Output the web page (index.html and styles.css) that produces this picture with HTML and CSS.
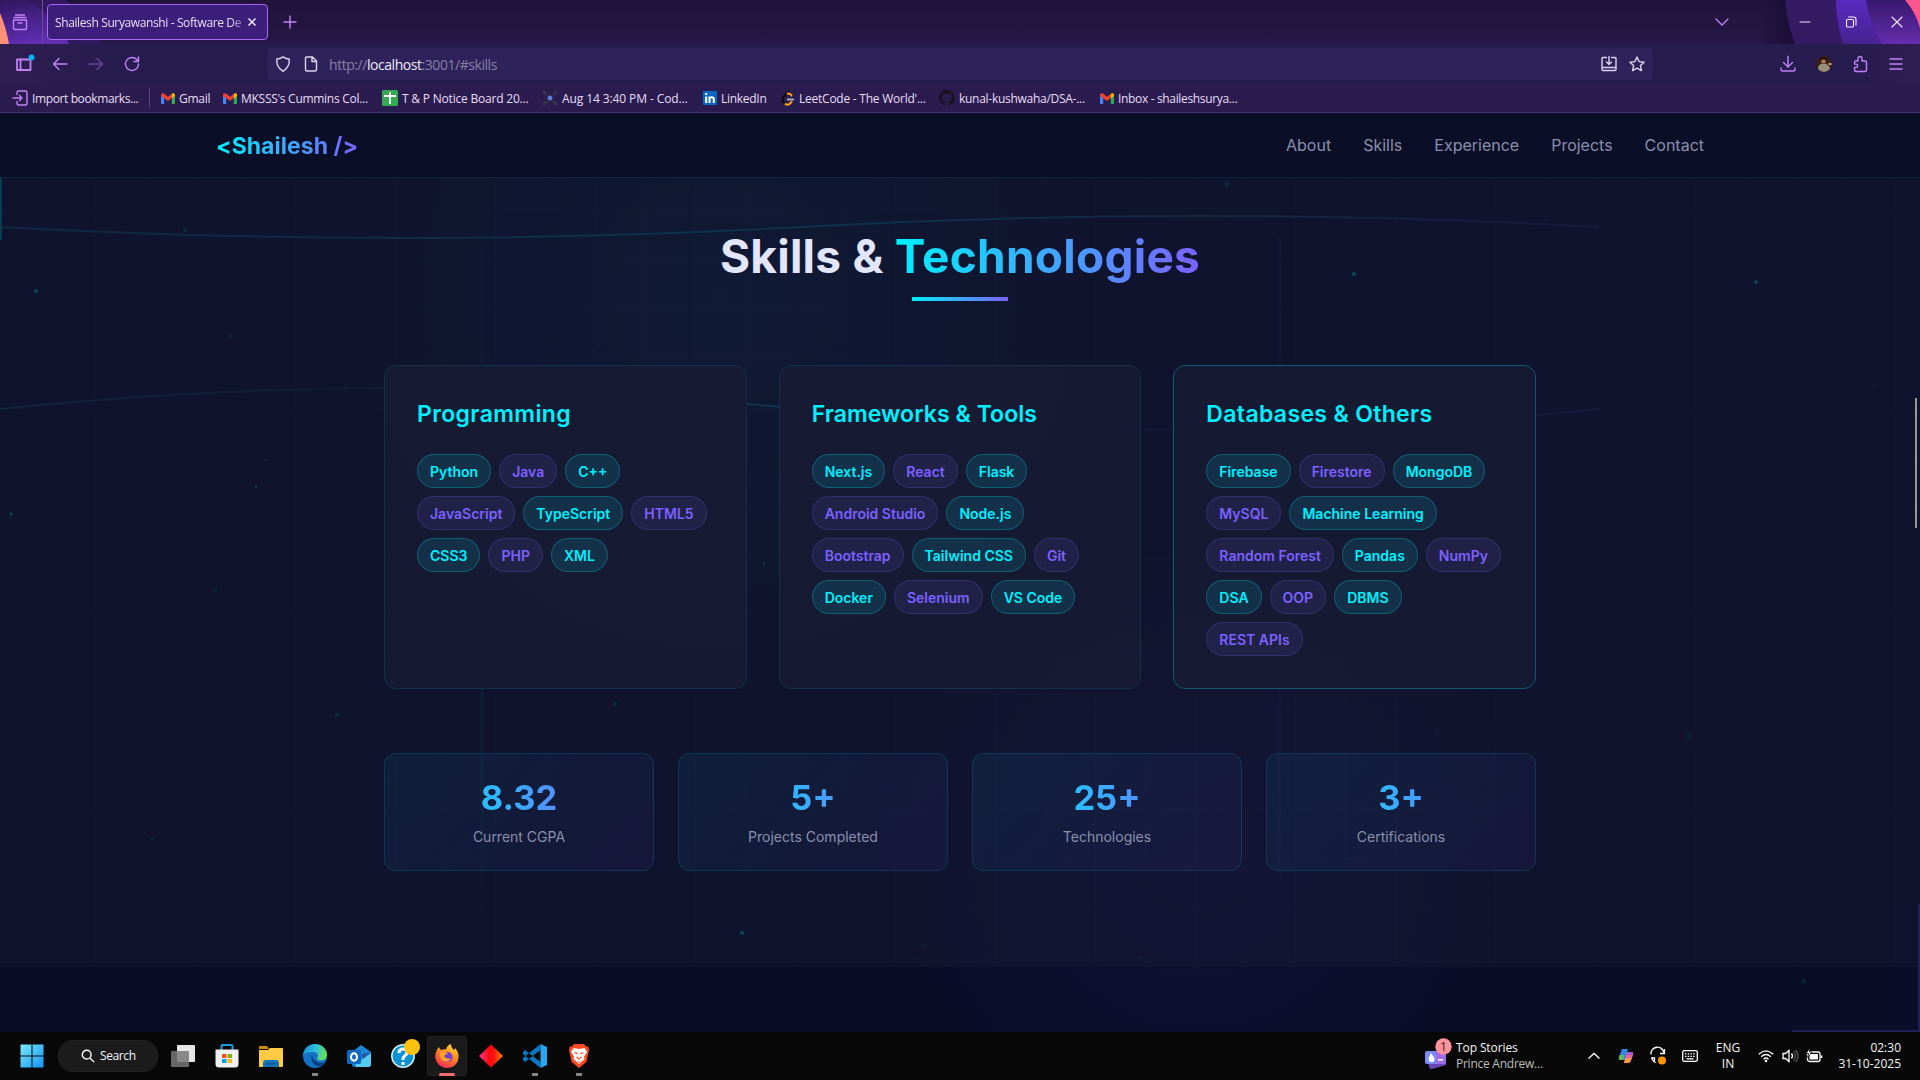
FILE: index.html
```html
<!DOCTYPE html>
<html lang="en">
<head>
<meta charset="utf-8">
<title>Shailesh Suryawanshi - Software Developer</title>
<link rel="stylesheet" href="styles.css">
</head>
<body>
<svg class="defs" width="0" height="0" aria-hidden="true">
  <defs>
    <symbol id="gmail" viewBox="0 0 14 11"><path fill="#4285f4" d="M0 2v8q0 1 1 1h2.200V5z"/><path fill="#34a853" d="M14 2v8q0 1-1 1h-2.200V5z"/><path fill="#ea4335" d="M0 2C0 .2 1.800-.3 3 .6l4 3.200L10.800.8V5L7 8 0 3z"/><path fill="#fbbc04" d="M10.800.8C12.200-.4 14 .2 14 2v1l-3.200 2.500z"/></symbol>
  </defs>
</svg>

<header class="browser">
  <div class="tabbar">
    <svg class="tabbar-art art-left" viewBox="0 0 110 44">
      <defs><linearGradient id="al" x1="0" y1="0" x2="0.300" y2="1"><stop offset="0" stop-color="#2f175f"/><stop offset="1" stop-color="#5f2db0"/></linearGradient></defs>
      <path fill="#32195f" d="M0 0h66q28 20 37 44H0z"/><path fill="url(#al)" d="M0 0h27q30 18 42 44H0z"/><path fill="#ff9076" d="M0 13q6 14 9 31H0z"/>
    </svg>
    <svg class="tabbar-art art-right" viewBox="0 0 140 44">
      <defs><linearGradient id="ar" x1="0" y1="0" x2="0" y2="1"><stop offset="0" stop-color="#36196d"/><stop offset="1" stop-color="#652dae"/></linearGradient><linearGradient id="ab" x1="0" y1="0" x2="0" y2="1"><stop offset="0" stop-color="#5a2bc0"/><stop offset="1" stop-color="#472291"/></linearGradient><linearGradient id="as"><stop offset="0" stop-color="#180d36" stop-opacity="0"/><stop offset="1" stop-color="#180d36"/></linearGradient></defs>
      <path fill="url(#as)" d="M-20 0h30l8 44H-20z"/><path fill="#341b64" d="M5 0h135v44H15Q7 22 5 0z"/><path fill="url(#ab)" d="M56 0h84v44H63Q56 22 56 0z"/><path fill="url(#ar)" d="M86 0h54v44h-38Q90 24 86 0z"/><path fill="#ff558e" d="M125 0h15v28q-5-17-15-28z"/>
    </svg>
    <svg class="ico view" viewBox="0 0 16 16"><path d="M3.500 1h9M2 3.500h12M1.500 6h13v8q0 1.500-1.500 1.500H3Q1.500 15.500 1.500 14zM6 9h4"/></svg>
    <div class="tab"><span class="tab-title">Shailesh Suryawanshi - Software De</span><svg class="tab-x" viewBox="0 0 10 10"><path d="M1.500 1.500l7 7M8.500 1.500l-7 7"/></svg></div>
    <svg class="ico plus" viewBox="0 0 16 16"><path d="M8 2v12M2 8h12"/></svg>
    <div class="winctl">
      <svg class="ico" viewBox="0 0 16 16"><path d="M2 5l6 6 6-6"/></svg>
      <svg class="ico wc" viewBox="0 0 16 16"><path d="M3 8h10"/></svg>
      <svg class="ico wc" viewBox="0 0 16 16"><rect x="3.500" y="5.500" width="7" height="7.500" rx="1"/><path d="M5.500 3h5q2.500 0 2.500 2.500V11"/></svg>
      <svg class="ico wc" viewBox="0 0 16 16"><path d="M3 3l10 10M13 3L3 13"/></svg>
    </div>
  </div>

  <div class="toolbar">
    <div class="tools">
      <svg class="ico" viewBox="0 0 16 16"><path d="M1 3.500h13.500v10.500H1z" stroke-width="1.800"/><path d="M4.500 3.500V14" stroke-width="1.800"/><circle class="dot-new" cx="15.500" cy="1.500" r="3"/></svg>
      <svg class="ico" viewBox="0 0 16 16"><path d="M15 8H1.500M7 2.500L1.500 8 7 13.500"/></svg>
      <svg class="ico off" viewBox="0 0 16 16"><path d="M1 8h13.500M9 2.500L14.500 8 9 13.500"/></svg>
      <svg class="ico" viewBox="0 0 16 16"><path d="M13.500 4.500A6.500 6.500 0 1 0 14.500 8M14.500 1v4.500H10"/></svg>
    </div>
    <div class="urlbar">
      <svg class="ico pale" viewBox="0 0 16 16"><path d="M8 .8q3 2 6.200 2.200Q15 11 8 15.300 1 11 1.800 3 5 2.800 8 .8z"/></svg>
      <svg class="ico pale" viewBox="0 0 16 16"><path d="M3.500 1h6L13.500 5v8.500q0 1.500-1.500 1.500H4q-1.500 0-1.500-1.500V2q0-1 1-1zM9 1v4.500h4.500"/></svg>
      <span class="url">http://<b>localhost</b>:3001/#skills</span>
      <svg class="ico pale" viewBox="0 0 16 16"><path d="M5.500 1.500H2Q1 1.500 1 2.500v11Q1 14.500 2 14.500h12q1 0 1-1v-11q0-1-1-1h-3.500M1 11.500h14M8 .5V8M5.500 6L8 8.500 10.500 6"/></svg>
      <svg class="ico pale" viewBox="0 0 16 16"><path d="M8 1l2.100 4.600 5 .6-3.700 3.400 1 5L8 12.100l-4.400 2.500 1-5L.9 6.200l5-.6z"/></svg>
    </div>
    <div class="tools right">
      <svg class="ico" viewBox="0 0 16 16"><path d="M8 .5v10M3.500 6.500L8 11l4.500-4.500M1 12v1.500Q1 15 2.500 15h11q1.500 0 1.500-1.500V12"/></svg>
      <svg class="avatar" viewBox="0 0 16 16"><circle cx="8" cy="8" r="8" fill="#3b1f1b"/><path fill="#989079" d="M2 13q0-5.500 5.500-5.500T14 13Q8 19 2 13z"/><circle cx="7.500" cy="4.500" r="2.600" fill="#a8764e"/><path fill="#20130f" d="M4 5q0-4 4-4t3 5L8 3z"/><path fill="#c6a66a" d="M12.500 7h3v2h-3z"/></svg>
      <svg class="ico" viewBox="0 0 16 16"><path d="M6 5V2.500a2 2 0 0 1 4 0V5H13q1.500 0 1.500 1.500V14q0 1.500-1.500 1.500H4Q2.500 15.500 2.500 14v-2.500H4a1.700 1.700 0 0 0 0-3.400H2.500V6.500Q2.500 5 4 5z"/></svg>
      <svg class="ico" viewBox="0 0 16 16"><path d="M2 3h12M2 8h12M2 13h12"/></svg>
    </div>
  </div>

  <nav class="bookmarks">
    <span class="bm bm-import"><svg class="ico" viewBox="0 0 16 16"><path d="M5 4.500V2.500Q5 1 6.500 1h7Q15 1 15 2.500v11q0 1.500-1.500 1.500h-7Q5 15 5 13.500v-2M1 8h9M7.500 5.500L10 8l-2.500 2.500"/></svg>Import bookmarks...</span>
    <span class="bm bm-1"><svg width="14" height="11"><use href="#gmail"/></svg>Gmail</span>
    <span class="bm bm-2"><svg width="14" height="11"><use href="#gmail"/></svg>MKSSS's Cummins Col...</span>
    <span class="bm bm-3"><svg width="16" height="16" viewBox="0 0 16 16"><rect width="16" height="16" rx="1.500" fill="#34a853"/><path stroke="#fff" stroke-width="1.800" d="M2 6h12M8 2v12"/></svg>T &amp; P Notice Board 20...</span>
    <span class="bm bm-4"><svg width="16" height="16" viewBox="0 0 16 16"><path stroke="#373548" stroke-width="3" d="M1 1l4 4M15 1l-4 4M1 15l4-4M15 15l-4-4"/><circle cx="8" cy="8" r="2.500" fill="#5b7fd0"/></svg>Aug 14 3:40 PM - Cod...</span>
    <span class="bm bm-5"><svg width="14" height="14" viewBox="0 0 14 14"><rect width="14" height="14" rx="1" fill="#0a66c2"/><path stroke="#fff" stroke-width="2" fill="none" d="M3.200 5.500V12M6.500 12V5.500M6.500 8.500Q6.500 6.300 8.700 6.300 10.800 6.300 10.800 8.500V12M3.200 2v2"/></svg>LinkedIn</span>
    <span class="bm bm-6"><svg width="14" height="16" viewBox="0 0 14 16"><g fill="none" stroke-width="2"><path stroke="#0d0b12" d="M8.500.8L2 7.500q-1.500 2 0 4l2 2"/><path stroke="#ffa116" d="M6 4q2-1 3 0l2 2M4 13.500q2.500 2.500 5 0l2-2"/><path stroke="#b3b1b0" d="M6 9.500h7"/></g></svg>LeetCode - The World'...</span>
    <span class="bm bm-7"><svg width="16" height="16" viewBox="0 0 16 16"><path fill="#17131c" d="M8 0a8 8 0 0 0-2.500 15.600c.4 0 .5-.2.500-.4v-1.500c-2.200.5-2.700-1-2.700-1-.4-.9-.9-1.100-.9-1.100-.7-.5.100-.5.100-.5.800 0 1.200.8 1.200.8.700 1.300 1.900.9 2.300.7 0-.5.300-.9.500-1.100-1.800-.2-3.600-.9-3.600-4 0-.8.300-1.500.8-2.100-.1-.2-.4-1 .1-2.100 0 0 .7-.2 2.200.8a7.500 7.500 0 0 1 4 0c1.500-1 2.200-.8 2.200-.8.400 1.100.1 1.900.1 2.100.5.600.8 1.300.8 2.100 0 3.100-1.900 3.800-3.700 4 .3.300.6.800.6 1.500v2.200c0 .200.100.500.500.400A8 8 0 0 0 8 0z"/></svg>kunal-kushwaha/DSA-...</span>
    <span class="bm bm-8"><svg width="14" height="11"><use href="#gmail"/></svg>Inbox - shaileshsurya...</span>
  </nav>
</header>

<main class="page">
  <div class="glow"></div>
  <nav class="sitenav">
    <span class="logo">&lt;Shailesh /&gt;</span>
    <div class="links"><span>About</span><span>Skills</span><span>Experience</span><span>Projects</span><span>Contact</span></div>
  </nav>

  <section class="skills">
    <svg class="scene" viewBox="0 0 1920 789" aria-hidden="true">
      <defs>
        <linearGradient id="c1" gradientUnits="userSpaceOnUse" x1="0" y1="0" x2="1600" y2="0"><stop offset="0" stop-color="#00f0ff" stop-opacity=".09"/><stop offset=".5" stop-color="#00f0ff" stop-opacity=".12"/><stop offset=".8" stop-color="#1fb5d0" stop-opacity=".12"/><stop offset="1" stop-color="#7b61ff" stop-opacity=".06"/></linearGradient>
        <linearGradient id="c2" gradientUnits="userSpaceOnUse" x1="0" y1="0" x2="1600" y2="0"><stop offset="0" stop-color="#00f0ff" stop-opacity=".08"/><stop offset=".25" stop-color="#00f0ff" stop-opacity=".03"/><stop offset=".5" stop-color="#00f0ff" stop-opacity=".15"/><stop offset=".7" stop-color="#7b61ff" stop-opacity=".05"/><stop offset="1" stop-color="#7b61ff" stop-opacity=".07"/></linearGradient>
        <linearGradient id="v1" x1="0" y1="0" x2="0" y2="1"><stop offset="0" stop-color="#00f0ff" stop-opacity="0"/><stop offset=".6" stop-color="#00f0ff" stop-opacity=".045"/><stop offset="1" stop-color="#00f0ff" stop-opacity="0"/></linearGradient>
      </defs>
      <rect x="480" y="0" width="4" height="760" fill="url(#v1)"/>
      <rect x="1277" y="60" width="4" height="640" fill="#7b61ff" opacity=".03"/>
      <path fill="none" stroke="url(#c1)" stroke-width="2" d="M0 49Q400 71 800 49T1600 49"/>
      <path fill="none" stroke="url(#c2)" stroke-width="2" d="M0 231Q400 189 800 231T1600 231"/>
      <g fill="#00c8c8" opacity=".3">
        <circle cx="36" cy="113" r="2"/><circle cx="266" cy="282" r=".8"/><circle cx="256" cy="309" r="1"/><circle cx="11" cy="336" r="1.500"/><circle cx="742" cy="755" r="2"/><circle cx="1354" cy="96" r="2"/><circle cx="1756" cy="104" r="1.800"/><circle cx="1437" cy="556" r=".8"/>
      </g>
      <g fill="#00c8c8" opacity=".14">
        <circle cx="185" cy="52" r="2"/><circle cx="231" cy="158" r="1.600"/><circle cx="337" cy="537" r="2.300"/><circle cx="615" cy="526" r="2"/><circle cx="152" cy="661" r="1.500"/><circle cx="764" cy="385" r="1.600"/><circle cx="1227" cy="6" r="2.500"/>
      </g>
      <g fill="#00c8c8" opacity=".08">
        <circle cx="215" cy="413" r="2.500"/><circle cx="599" cy="167" r="1.500"/><circle cx="1689" cy="558" r="2.500"/><circle cx="1688" cy="570" r="1"/><circle cx="1140" cy="780" r="1.500"/><circle cx="923" cy="767" r="2"/><circle cx="1875" cy="207" r="1.500"/>
      </g>
    </svg>
    <h2 class="title">Skills &amp; <span class="grad">Technologies</span></h2>
    <div class="underline"></div>
    <div class="cards">
      <article class="card">
        <h3 class="h-prog">Programming</h3>
        <div class="pills"><span>Python</span><span>Java</span><span>C++</span><span>JavaScript</span><span>TypeScript</span><span>HTML5</span><span>CSS3</span><span>PHP</span><span>XML</span></div>
      </article>
      <article class="card">
        <h3 class="h-fw">Frameworks &amp; Tools</h3>
        <div class="pills"><span>Next.js</span><span>React</span><span>Flask</span><span>Android Studio</span><span>Node.js</span><span>Bootstrap</span><span>Tailwind CSS</span><span>Git</span><span>Docker</span><span>Selenium</span><span>VS Code</span></div>
      </article>
      <article class="card active">
        <h3 class="h-db">Databases &amp; Others</h3>
        <div class="pills"><span>Firebase</span><span>Firestore</span><span>MongoDB</span><span>MySQL</span><span>Machine Learning</span><span>Random Forest</span><span>Pandas</span><span>NumPy</span><span>DSA</span><span>OOP</span><span>DBMS</span><span>REST APIs</span></div>
      </article>
    </div>
    <div class="stats">
      <div class="stat"><div class="num grad">8.32</div><div class="lbl">Current CGPA</div></div>
      <div class="stat"><div class="num grad">5+</div><div class="lbl">Projects Completed</div></div>
      <div class="stat"><div class="num grad">25+</div><div class="lbl">Technologies</div></div>
      <div class="stat"><div class="num grad">3+</div><div class="lbl">Certifications</div></div>
    </div>
  </section>
  <div class="edge edge-l"></div>
  <div class="edge edge-r"></div>
  <div class="edge edge-b"></div>
  <div class="edge particle"></div>
  <div class="thumb"></div>
</main>

<footer class="taskbar">
  <div class="apps">
    <svg class="app" viewBox="0 0 24 24"><defs><linearGradient id="w" x1="0" y1="0" x2="24" y2="24" gradientUnits="userSpaceOnUse"><stop offset="0" stop-color="#7ceafc"/><stop offset="1" stop-color="#1193f5"/></linearGradient></defs><path fill="url(#w)" d="M.5.5h11v11H.5zM12.500.5h11v11h-11zM.5 12.500h11v11H.5zM12.500 12.500h11v11h-11z"/></svg>
    <div class="search"><svg viewBox="0 0 16 16"><circle cx="6.500" cy="6.500" r="5"/><path d="M10.500 10.500l4.500 4.500"/></svg>Search</div>
    <svg class="app" viewBox="0 0 24 24"><rect x="6" y="1" width="18" height="17" rx="1" fill="#e6e6e6"/><rect x="0" y="7" width="18" height="16" rx="1" fill="#777" opacity=".85"/></svg>
    <svg class="app" viewBox="0 0 24 24"><path fill="none" stroke="#1c9ade" stroke-width="2" d="M6.500 7V2q0-1 1-1h9q1 0 1 1v5"/><path fill="#f0f0f0" d="M.5 5.500h23V20q0 3.500-3.500 3.500H4Q.5 23.500.5 20z"/><path fill="#f25022" d="M7 10h4.500v4H7z"/><path fill="#7fba00" d="M12.500 10H17v4h-4.500z"/><path fill="#00a4ef" d="M7 15h4.500v4H7z"/><path fill="#ffb900" d="M12.500 15H17v4h-4.500z"/></svg>
    <svg class="app" viewBox="0 0 24 24"><path fill="#d08a05" d="M0 2h8l2 3H0z"/><path fill="#ffcb45" d="M0 6h9l2-2h12q1 0 1 1v17q0 1-1 1H0z"/><path fill="#1372b8" d="M4 23v-4q0-3 3-3h10q3 0 3 3v4z"/><path fill="#0b5598" d="M7 19h10v1.500H7z"/></svg>
    <svg class="app" viewBox="0 0 24 24"><defs><linearGradient id="e" x1="0" y1="0" x2="1" y2=".2"><stop offset="0" stop-color="#1388dd"/><stop offset=".6" stop-color="#31c3d8"/><stop offset="1" stop-color="#63dc5b"/></linearGradient></defs><circle cx="12" cy="12" r="12" fill="#1372c4"/><path fill="url(#e)" d="M0 12C0 5 5.500 0 12 0s12 5 12 10.500c0 4-3 6-6.500 6-3 0-4-1.500-3-3.500s0-5-3.500-5C5 8 1 9 0 12z"/><path fill="#0b3f7c" d="M9 11c-2 5 1 11 8 11.300 2-.8 4-2 5.300-4.300-4 2-12 1-13.300-7z"/></svg>
    <svg class="app" viewBox="0 0 24 24"><path fill="#1787d6" d="M5 8l9-7 10 7v12q0 3-3 3H8q-3 0-3-3z"/><path fill="#2455a8" d="M15 10l9-2-8 8z"/><path fill="#54ccf2" d="M9 20l15-11v11q0 3-3 3H9z"/><rect y="6" width="14" height="14" rx="1.500" fill="#0f68bd"/><ellipse cx="7" cy="13" rx="3" ry="3.700" fill="none" stroke="#fff" stroke-width="2"/></svg>
    <svg class="app help" viewBox="0 0 24 24"><circle cx="12" cy="12" r="11.200" fill="#0d93d2" stroke="#d9edf5" stroke-width="1.500"/><path fill="none" stroke="#fff" stroke-width="3" d="M8 9q0-4 4-4t4 3.500q0 2-2.500 3.500-1.500 1-1.500 4M12 18v3"/><circle cx="21" cy="3" r="8" fill="#ffc20e"/></svg>
    <div class="tile"><svg class="app" viewBox="0 0 24 24"><defs><linearGradient id="f" x1=".8" y1="0" x2=".3" y2="1"><stop offset="0" stop-color="#ffdf3f"/><stop offset=".45" stop-color="#ff8b1f"/><stop offset="1" stop-color="#f32c5c"/></linearGradient></defs><path fill="url(#f)" d="M2 6l1.500-3L6 6q3-1 5-.5Q12 1 16 0q0 4 3.500 6l.5-2q4 4 3.500 9.500C23 20 18 24 12 24S0 19 .3 12Q.5 8.500 2 6z"/><circle cx="12.500" cy="13" r="5" fill="#7a3bd1"/><path fill="#ffa62b" d="M6 8q5-1 7 2-3 0-4 2 2 4 7 2-3 6-9 2-3-4-1-8z"/></svg></div>
    <svg class="app" viewBox="0 0 24 24"><defs><linearGradient id="d"><stop offset="0" stop-color="#f03ba0"/><stop offset=".4" stop-color="#ff0d10"/><stop offset=".6" stop-color="#ff0d10"/><stop offset="1" stop-color="#ff8a00"/></linearGradient></defs><path fill="url(#d)" d="M12 .5L24 12 12 23.500 0 12z"/></svg>
    <svg class="app" viewBox="0 0 24 24"><path fill="#0a78c2" d="M0 8l2-2 15.500 12v6L0 10zM0 16l2 2L17.500 6V0L0 14z"/><path fill="#2aa5f0" d="M17.500 0L24 3v18l-6.500 3z"/></svg>
    <svg class="app brave" viewBox="0 0 20 24"><path fill="#fb4a21" d="M5 0h10l2 2.500 2-.3L20 6l-.7 3-2 9-7.300 6-7.300-6-2-9L0 6l1-3.800 2 .3z"/><path fill="#fff" d="M4.500 4L10 5l5.500-1L18 8l-3 4.500.5 2.500-5.500 5-5.500-5 .5-2.500L2 8z"/><path fill="#fb4a21" d="M5 8l4 .8-1.500 1.700zM15 8l-4 .8 1.500 1.700zM7 13l1.500-.5L10 15l1.500-2.500L13 13l-3 3zM8 17.500h4L10 18.800z"/></svg>
  </div>
  <div class="news">
    <svg viewBox="0 0 28 32"><path fill="#6b48b8" d="M4 20l16-4 2 9-14 4q-3 0-3-3z"/><rect x="1" y="11" width="21" height="13" rx="2" fill="#7b8cf6"/><path fill="#a06be8" d="M12 11h10v10q0 3-3 3h-7z"/><path fill="#fff" d="M6 22q-3-3 0-7l1-2q1 2 2 3 3 4 0 6zM14 19h5v1.500h-5z"/><circle cx="19.500" cy="6.500" r="8.200" fill="#ff929b"/><text x="19.500" y="10.800" class="badge">1</text></svg>
    <div><div class="n1">Top Stories</div><div class="n2">Prince Andrew...</div></div>
  </div>
  <div class="tray">
    <svg class="ti chev" viewBox="0 0 16 16"><path d="M2.500 10.500L8 5.500l5.500 5"/></svg>
    <svg class="ti" viewBox="0 0 16 16"><g stroke="none"><path fill="#2a8bea" d="M4 1h6L7 12H3Q0 12 1 9z"/><path fill="#62bd4e" d="M1.500 7h5L5 12H3Q0 12 1 9z"/><path fill="#ef5fa0" d="M9 4h4q3 0 2 3l-2 6q-1 2-3 2H6z"/><path fill="#f79c42" d="M7.500 10h6l-1 3q-1 2-3 2H6z"/><path fill="#a758dd" d="M10 4h3q3 0 2 3H9z"/></g></svg>
    <svg class="ti" viewBox="0 0 16 16"><path d="M1 6.500A6.500 6.500 0 0 1 14 5M14.500 1v4.500H10M4.500 15v-5H1M2 11q1 2.500 4 3.500"/><circle cx="12" cy="12.500" r="4" fill="#ff9500" stroke="none"/></svg>
    <svg class="ti" viewBox="0 0 16 16"><rect x=".7" y="2.700" width="14.600" height="10.600" rx="1.500"/><path d="M3 5.800h10M3 8.300h10" stroke-dasharray="1.500 1.200"/><path d="M4.500 10.800h7"/></svg>
    <div class="lang">ENG<br>IN</div>
    <svg class="ti" viewBox="0 0 16 16"><path d="M.8 6.300Q8-.5 15.200 6.300M3.200 8.800q4.800-4.500 9.600 0M5.500 11.200q2.500-2.300 5 0"/><circle cx="8" cy="13" r="1.300" fill="#fff" stroke="none"/></svg>
    <svg class="ti" viewBox="0 0 16 16"><path d="M1 5.500h2.500L7 2.500v11L3.500 10.500H1zM9.500 5.500q2 2.500 0 5"/><path stroke="#555" d="M11.500 3.500q4 4.500 0 9M13.500 2q5 6 0 12"/></svg>
    <svg class="ti" viewBox="0 0 16 16"><rect x="1.500" y="4" width="12.500" height="9.500" rx="2"/><rect x="3.500" y="6" width="8.500" height="5.500" fill="#fff" stroke="none"/><path d="M15.500 7.500V10" stroke-width="1.600"/><path fill="#fff" stroke="#0a0a0a" stroke-width=".8" d="M4 0L0 5.500h2.500L1.500 9.500 6 4H3.500z"/></svg>
    <div class="clock">02:30<br>31-10-2025</div>
  </div>
</footer>
</body>
</html>
```
FILE: styles.css
```css
* { box-sizing: border-box; }
body {
  margin: 0; width: 1920px; height: 1080px; overflow: hidden;
  display: flex; flex-direction: column;
  background: #0a0e27; font-family: Inter, sans-serif;
}
svg { display: block; flex: none; overflow: visible; }
.defs { position: absolute; }

/* Browser chrome */
.browser { height: 113px; color: #e9dcf7; font: 12px "Open Sans", sans-serif; border-bottom: 1px solid #3d2f78; background: #2b1c4e; }
.tabbar { position: relative; height: 44px; display: flex; align-items: center; background: linear-gradient(#20133a, #261745); overflow: hidden; }
.tabbar-art { position: absolute; top: 0; height: 44px; }
.art-left { left: 0; width: 110px; }
.art-right { right: 0; width: 140px; }
.ico { position: relative; width: 16px; height: 16px; fill: none; stroke: #c183f7; stroke-width: 1.4; stroke-linejoin: round; stroke-linecap: round; }
.view { margin-left: 12px; }
.tab {
  position: relative; margin-left: 19px; width: 221px; height: 36px; padding: 0 10px 0 7px;
  display: flex; align-items: center; justify-content: space-between;
  border: 1px solid #a668f5; border-radius: 4px; background: #3c1f7a;
}
.tab::before { content: ""; position: absolute; left: -6px; top: -5px; width: 1px; height: 46px; background: #6d4b94; }
.tab-title { width: 192px; white-space: nowrap; letter-spacing: -0.38px; -webkit-mask-image: linear-gradient(90deg, #000 176px, transparent 194px); mask-image: linear-gradient(90deg, #000 176px, transparent 194px); }
.tab-x { width: 10px; height: 10px; stroke: #efe6fa; stroke-width: 1.5; fill: none; }
.plus { margin-left: 14px; }
.winctl { margin-left: auto; padding-right: 15px; display: flex; align-items: center; }
.winctl .wc { stroke: #f2ecfa; stroke-width: 1.1; margin-left: 30px; }
.winctl .wc:nth-child(2) { margin-left: 67px; }

.toolbar { height: 40px; display: flex; align-items: center; background: linear-gradient(90deg, #2e1d50, #271c4e 120px, #271c4e 1860px, #2e1d50); }
.tools { width: 267px; padding-left: 16px; display: flex; gap: 20px; }
.tools.right { padding-left: 127px; gap: 20px; }
.tools .off { opacity: .4; }
.tools .dot-new { fill: #00b3f4; stroke: none; }
.urlbar { width: 1386px; height: 32px; padding: 0 8px; display: flex; align-items: center; gap: 12px; border-radius: 4px; background: #2d235a; }
.pale { stroke: #dcd3ee; }
.url { flex: 1; margin-left: -2px; padding-top: 1px; font-size: 14px; letter-spacing: -0.45px; color: #8a7fa9; }
.url b { font-weight: 400; color: #efe9fb; }
.avatar { width: 16px; height: 16px; }

.bookmarks { height: 28px; padding-left: 12px; display: flex; align-items: center; background: #2a1c4e; white-space: nowrap; letter-spacing: -0.28px; }
.bm { display: flex; align-items: center; gap: 4px; }
.bm-import { width: 138px; gap: 4px; height: 20px; border-right: 1px solid #5f3f86; margin-right: 11px; letter-spacing: -0.38px; }
.bm-1 { width: 62px; }
.bm-2 { width: 159px; }
.bm-3 { width: 160px; letter-spacing: -0.2px; }
.bm-4 { width: 161px; letter-spacing: -0.1px; }
.bm-5 { width: 78px; }
.bm-6 { width: 158px; letter-spacing: -0.24px; }
.bm-7 { width: 161px; }
.bm-8 { letter-spacing: -0.34px; }

/* Portfolio page */
.page { position: relative; height: 919px; overflow: hidden; background: #090d27; }
.glow {
  position: absolute; inset: 0;
  background:
    radial-gradient(circle at 720px 180px, rgba(0, 240, 255, .055), transparent 380px),
    radial-gradient(circle at 1200px 740px, rgba(150, 60, 255, .06), transparent 330px);
}
.sitenav {
  position: relative; height: 65px; padding: 0 216px;
  display: flex; align-items: center; justify-content: space-between;
  background: #0a0e27; border-bottom: 1px solid #0b2540;
}
.logo { padding-top: 2px; font-size: 23px; font-weight: 700; letter-spacing: 0.03px; white-space: pre; }
.logo, .grad { color: transparent; background: linear-gradient(90deg, #00f0ff, #7b61ff); -webkit-background-clip: text; background-clip: text; }
.links { display: flex; gap: 32px; font-size: 16px; color: #8a90ae; }

.skills {
  position: relative; height: 789px; padding: 48px 384px 0;
  background:
    linear-gradient(90deg, transparent 45px, rgba(0, 240, 255, .01) 45px, rgba(0, 240, 255, .01) 46px, transparent 46px) 0 0 / 50px 100%,
    linear-gradient(transparent 30px, rgba(0, 240, 255, .01) 30px, rgba(0, 240, 255, .01) 31px, transparent 31px) 0 0 / 100% 50px,
    rgba(24, 25, 54, .5);
}
.scene { position: absolute; left: 0; top: 0; width: 1920px; height: 789px; }
.title { position: relative; margin: 0; height: 60px; line-height: 60px; font-size: 46px; font-weight: 700; letter-spacing: 0.24px; color: #e2e6ff; text-align: center; white-space: nowrap; }
.underline { width: 96px; height: 4px; margin: 11px auto 64px; background: linear-gradient(90deg, #00f0ff, #7b61ff); }
.cards { position: relative; display: grid; grid-template-columns: repeat(3, 1fr); gap: 32px; }
.card { height: 324px; padding: 32px; border: 1px solid #13304a; border-radius: 12px; background: rgba(23, 27, 51, .9); }
.card.active { border-color: #0f5a70; }
.card h3 { margin: 0 0 24px; font-size: 23px; line-height: 32px; font-weight: 600; color: #00f0ff; white-space: nowrap; }
.h-prog { letter-spacing: 0.38px; }
.h-fw { letter-spacing: 0.07px; }
.h-db { letter-spacing: 0.34px; }
.pills { display: flex; flex-wrap: wrap; gap: 8px; }
.pills span { height: 34px; padding: 0 12px; line-height: 33px; font-size: 14px; font-weight: 600; border-radius: 17px; white-space: nowrap; }
.pills span:nth-child(odd) { color: #00f0ff; background: rgba(0, 240, 255, .11); border: 1px solid rgba(0, 240, 255, .25); }
.pills span:nth-child(even) { color: #7b61ff; background: rgba(123, 97, 255, .11); border: 1px solid rgba(123, 97, 255, .21); }
.stats { position: relative; margin-top: 64px; display: grid; grid-template-columns: repeat(4, 1fr); gap: 24px; text-align: center; }
.stat { height: 118px; padding: 24px; border: 1px solid rgba(0, 240, 255, .13); border-radius: 12px; background: linear-gradient(135deg, rgba(0, 240, 255, .06), rgba(123, 97, 255, .055)); }
.num { font-size: 34.5px; line-height: 39px; height: 40px; font-weight: 700; }
.lbl { margin-top: 8px; font-size: 14px; line-height: 21px; color: #8a90ae; }

.edge { position: absolute; }
.edge-l { left: 0; top: 65px; width: 2px; height: 62px; background: #0b3c50; }
.edge-r { right: 0; bottom: 0; width: 2px; height: 128px; background: #231f58; }
.edge-b { right: 0; bottom: 0; width: 128px; height: 2px; background: #231f58; }
.particle { left: 1801px; top: 866px; width: 5px; height: 5px; border-radius: 50%; background: #0a2038; }
.thumb { position: absolute; left: 1915px; top: 285px; width: 2px; height: 130px; background: #9a9a95; }

/* Taskbar */
.taskbar { height: 48px; display: flex; align-items: center; background: #080808; color: #f5f5f5; font: 12px/16px "Open Sans", sans-serif; }
.apps { width: 1424px; padding-left: 20px; display: flex; align-items: center; gap: 20px; }
.app { width: 24px; height: 24px; }
.search { width: 100px; height: 32px; margin: 0 -7px 0 -6px; padding-left: 23px; display: flex; align-items: center; gap: 5px; border-radius: 16px; background: #1b1b1b; box-shadow: inset 0 0 0 1px #222; letter-spacing: -0.4px; }
.search svg { width: 14px; height: 14px; fill: none; stroke: #fff; stroke-width: 1.6; }
.tile { position: relative; width: 40px; height: 40px; margin: 0 -8px; display: flex; align-items: center; justify-content: center; border-radius: 4px; background: #1a1a1a; box-shadow: inset 0 0 0 1px #242424; }
.tile::after { content: ""; position: absolute; left: 12px; bottom: 0; width: 16px; height: 3px; border-radius: 2px; background: #f26d6d; }
.brave { width: 20px; margin: 0 2px; }
.apps .app:nth-child(6), .apps .app:nth-child(11), .apps .brave {
  height: 40px; padding: 8px 0;
  background: linear-gradient(#858585, #858585) no-repeat center bottom / 6px 3px;
}
.news { display: flex; align-items: center; gap: 4px; width: 160px; }
.news svg { width: 28px; height: 32px; }
.badge { fill: #301418; font: 12px "Open Sans", sans-serif; text-anchor: middle; }
.n1 { letter-spacing: -0.1px; }
.n2 { color: #bdbdbd; letter-spacing: -0.25px; white-space: nowrap; }
.tray { flex: 1; padding-right: 19px; display: flex; align-items: center; }
.ti { width: 16px; height: 16px; fill: none; stroke: #fff; stroke-width: 1.3; margin-left: 8px; }
.tray .ti:nth-child(1) { margin-left: 2px; }
.tray .ti:nth-child(2), .tray .ti:nth-child(3), .tray .ti:nth-child(4) { margin-left: 16px; }
.lang { width: 60px; text-align: center; }
.tray .lang + .ti { margin-left: 0; }
.clock { margin-left: auto; text-align: right; }
```
